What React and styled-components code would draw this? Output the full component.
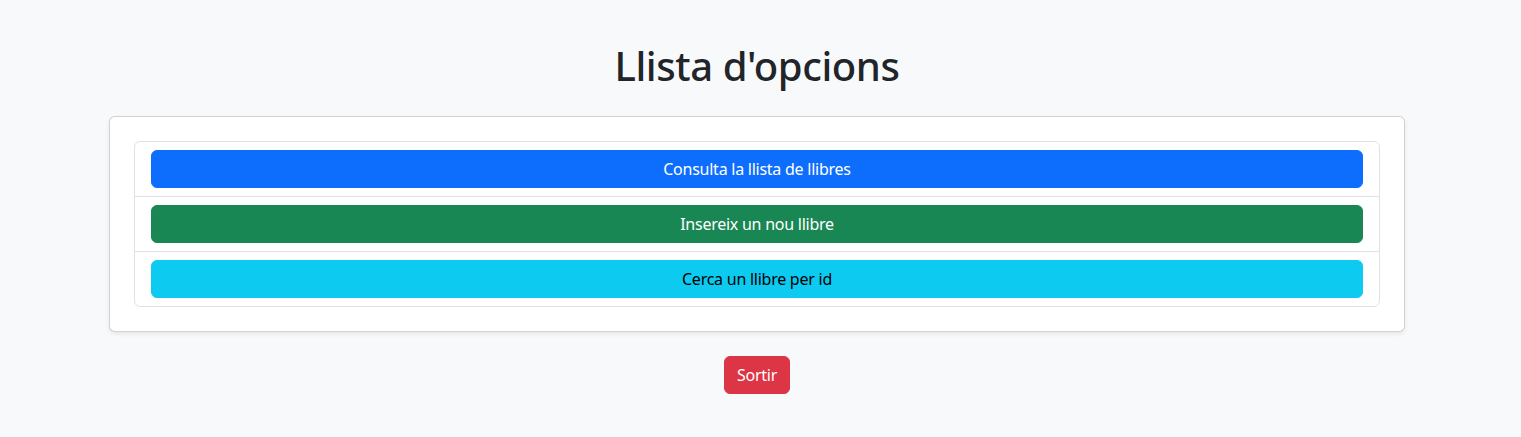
import React from "react";
import styled, { createGlobalStyle } from "styled-components";

const GlobalStyle = createGlobalStyle`
  html, body {
    margin: 0;
    padding: 0;
    background: #f8f9fa;
  }
  body {
    font-family: "Noto Sans", "Open Sans", sans-serif;
    color: #212529;
    font-size: 16px;
    line-height: 1.5;
  }
`;

const Page = styled.div`
  width: calc(100% - 7px);
  min-height: 437px;
`;

const Container = styled.main`
  max-width: 1296px;
  margin: 0 auto;
  padding: 42px 12px 0;
  display: flex;
  flex-direction: column;
  align-items: center;
`;

const Title = styled.h1`
  margin: 0 0 26px;
  font-size: 40px;
  font-weight: 500;
  line-height: 48px;
  letter-spacing: -0.4px;
  text-align: center;
`;

const Card = styled.section`
  align-self: stretch;
  background: #fff;
  border: 1px solid rgba(0, 0, 0, 0.175);
  border-radius: 6px;
  box-shadow: 0 2px 4px rgba(0, 0, 0, 0.075);
  padding: 24px;
`;

const List = styled.ul`
  list-style: none;
  margin: 0;
  padding: 0;
  border: 1px solid #dee2e6;
  border-radius: 6px;
`;

const Item = styled.li`
  padding: 8px 16px;
  & + & {
    border-top: 1px solid #dee2e6;
  }
`;

const variants = {
  primary: { bg: "#0d6efd", fg: "#fff" },
  success: { bg: "#198754", fg: "#fff" },
  info: { bg: "#0dcaf0", fg: "#000" },
  danger: { bg: "#dc3545", fg: "#fff" },
};

const Button = styled.button`
  display: block;
  width: ${(p) => (p.$block ? "100%" : "auto")};
  font-family: inherit;
  font-size: 16px;
  line-height: 24px;
  letter-spacing: -0.25px;
  padding: 6px 12px;
  border: 1px solid ${(p) => variants[p.$variant].bg};
  border-radius: 6px;
  background: ${(p) => variants[p.$variant].bg};
  color: ${(p) => variants[p.$variant].fg};
  text-align: center;
  cursor: pointer;
`;

const Footer = styled.div`
  margin-top: 24px;
  display: flex;
  justify-content: center;
`;

const options = [
  { label: "Consulta la llista de llibres", variant: "primary" },
  { label: "Insereix un nou llibre", variant: "success" },
  { label: "Cerca un llibre per id", variant: "info" },
];

export default function App() {
  return (
    <Page>
      <GlobalStyle />
      <Container>
        <Title>Llista d'opcions</Title>
        <Card>
          <List>
            {options.map((o) => (
              <Item key={o.label}>
                <Button $block $variant={o.variant}>
                  {o.label}
                </Button>
              </Item>
            ))}
          </List>
        </Card>
        <Footer>
          <Button $variant="danger">Sortir</Button>
        </Footer>
      </Container>
    </Page>
  );
}
